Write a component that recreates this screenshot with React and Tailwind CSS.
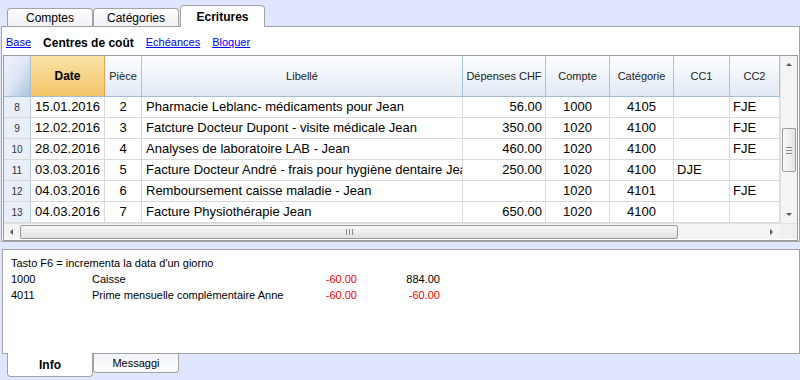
import React from 'react'

const cols = 'grid grid-cols-[27px_74px_37px_321px_83px_64px_64px_56px_50px]'

const rows = [
  ['8', '15.01.2016', '2', 'Pharmacie Leblanc- médicaments pour Jean', '56.00', '1000', '4105', '', 'FJE'],
  ['9', '12.02.2016', '3', 'Fatcture Docteur Dupont - visite médicale Jean', '350.00', '1020', '4100', '', 'FJE'],
  ['10', '28.02.2016', '4', 'Analyses de laboratoire LAB - Jean', '460.00', '1020', '4100', '', 'FJE'],
  ['11', '03.03.2016', '5', 'Facture Docteur André - frais pour hygiène dentaire Jean', '250.00', '1020', '4100', 'DJE', ''],
  ['12', '04.03.2016', '6', 'Remboursement caisse maladie - Jean', '', '1020', '4101', '', 'FJE'],
  ['13', '04.03.2016', '7', 'Facture Physiothérapie Jean', '650.00', '1020', '4100', '', ''],
]

const align = [
  'justify-center text-[10px] text-[#333] bg-[#e8eff9] border-r-[#b7cbe0]',
  'justify-start pl-[4px]',
  'justify-center',
  'justify-start pl-[4px]',
  'justify-end pr-[3px]',
  'justify-center',
  'justify-center',
  'justify-start pl-[3px]',
  'justify-start pl-[3px]',
]

function Arrow({ dir }) {
  const pts = {
    up: '1,5 4,2 7,5',
    down: '1,2 4,5 7,2',
    left: '5,1 2,4 5,7',
    right: '3,1 6,4 3,7',
  }[dir]
  return (
    <svg width="8" height="8" viewBox="0 0 8 8">
      <polygon points={pts} fill="#5a5a5a" />
    </svg>
  )
}

function Tab({ label, active, wide }) {
  if (active) {
    return (
      <div className="w-[85px] h-[22px] -mb-px ml-px bg-white border border-b-0 border-[#a3a3a3] rounded-t-[4px] flex items-center justify-center text-[12px] font-bold relative z-10">
        {label}
      </div>
    )
  }
  return (
    <div className={`${wide} h-[18px] bg-gradient-to-b from-white to-[#eef0f5] border border-b-0 border-[#a3a3a3] rounded-t-[4px] flex items-center justify-center text-[12px] pt-px`}>
      {label}
    </div>
  )
}

export default function App() {
  return (
    <div className="w-[800px] h-[380px] bg-[#dfe6fd] flex flex-col overflow-hidden text-black font-['Liberation_Sans',Arial,sans-serif]">
      {/* top tabs */}
      <div className="h-[26px] flex items-end pl-[7px] shrink-0">
        <Tab label="Comptes" wide="w-[86px]" />
        <Tab label="Catégories" wide="w-[86px]" />
        <Tab label="Ecritures" active />
      </div>

      {/* main panel */}
      <div className="ml-px w-[799px] h-[216px] shrink-0 bg-white border border-[#a3a3a3] px-px flex flex-col">
        <div className="h-[28px] flex items-center gap-[12px] pl-[3px] pt-[3px] text-[11px]">
          <span className="text-[#0000ff] underline">Base</span>
          <span className="text-[12px] font-bold">Centres de coût</span>
          <span className="text-[#0000ff] underline">Echéances</span>
          <span className="text-[#0000ff] underline">Bloquer</span>
        </div>

        <div className="flex-1 border border-[#9a9a9a] flex flex-col overflow-hidden">
          <div className="flex h-[167px]">
            <div className="w-[776px] overflow-hidden">
              {/* header */}
              <div className={`${cols} h-[41px] border-b border-[#a3bdd6] text-[11px] text-[#222]`}>
                <div className="bg-gradient-to-br from-[#eef2fc] via-[#dfe7f6] to-[#aac2dd] border-r border-[#a9c2dc]" />
                <div className="bg-gradient-to-b from-[#fae3a6] to-[#f4c466] border-r border-[#e9a449] flex items-center justify-center text-[12px] font-bold text-black">
                  Date
                </div>
                {['Pièce', 'Libellé', 'Dépenses CHF', 'Compte', 'Catégorie', 'CC1', 'CC2'].map((h) => (
                  <div key={h} className="bg-gradient-to-b from-[#fcfdfe] to-[#e2eaf5] border-r border-[#a9c2dc] flex items-center justify-center whitespace-nowrap overflow-hidden">
                    {h}
                  </div>
                ))}
              </div>
              {/* rows */}
              {rows.map((r) => (
                <div key={r[0]} className={`${cols} h-[21px] border-b border-[#d9d9d9] text-[13px]`}>
                  {r.map((c, i) => (
                    <div key={i} className={`flex items-center whitespace-nowrap overflow-hidden border-r border-[#d9d9d9] ${align[i]}`}>
                      {c}
                    </div>
                  ))}
                </div>
              ))}
            </div>
            {/* vertical scrollbar */}
            <div className="flex-1 bg-[#f4f3f5] border-l border-[#e2e2e2] flex flex-col items-center">
              <div className="h-[17px] flex items-center justify-center">
                <Arrow dir="up" />
              </div>
              <div className="h-[55px]" />
              <div className="w-[14px] h-[44px] rounded-[2px] border border-[#9a9a9a] bg-gradient-to-r from-[#f8f8f8] to-[#e4e4e4] flex flex-col items-center justify-center gap-[2px]">
                <div className="w-[6px] h-px bg-[#8a8a8a]" />
                <div className="w-[6px] h-px bg-[#8a8a8a]" />
                <div className="w-[6px] h-px bg-[#8a8a8a]" />
              </div>
              <div className="flex-1" />
              <div className="h-[17px] flex items-center justify-center">
                <Arrow dir="down" />
              </div>
            </div>
          </div>
          {/* horizontal scrollbar */}
          <div className="flex h-[16px] border-t border-[#e2e2e2]">
            <div className="w-[776px] bg-[#f4f3f5] flex items-center">
              <div className="w-[16px] flex items-center justify-center">
                <Arrow dir="left" />
              </div>
              <div className="w-[658px] h-[14px] rounded-[2px] border border-[#9a9a9a] bg-gradient-to-b from-[#f8f8f8] to-[#e2e2e2] flex items-center justify-center gap-[2px]">
                <div className="w-px h-[6px] bg-[#8a8a8a]" />
                <div className="w-px h-[6px] bg-[#8a8a8a]" />
                <div className="w-px h-[6px] bg-[#8a8a8a]" />
              </div>
              <div className="flex-1 flex items-center justify-end pr-[5px]">
                <Arrow dir="right" />
              </div>
            </div>
            <div className="flex-1 bg-[#f0f0f0]" />
          </div>
        </div>
      </div>

      {/* splitter gap */}
      <div className="h-[7px] shrink-0" />

      {/* info panel */}
      <div className="ml-[2px] w-[798px] h-[105px] shrink-0 bg-white border border-[#a3a3a3] pt-[5px] pl-[8px] text-[11px] leading-[16px]">
        <div>Tasto F6 = incrementa la data d'un giorno</div>
        <div className="grid grid-cols-[81px_220px_45px_83px]">
          <span>1000</span>
          <span>Caisse</span>
          <span className="text-right text-[#ff0000]">-60.00</span>
          <span className="text-right">884.00</span>
          <span>4011</span>
          <span>Prime mensuelle complémentaire Anne</span>
          <span className="text-right text-[#ff0000]">-60.00</span>
          <span className="text-right text-[#ff0000]">-60.00</span>
        </div>
      </div>

      {/* bottom tabs */}
      <div className="flex items-start pl-[7px] shrink-0">
        <div className="w-[86px] h-[24px] -mt-px bg-white border border-t-0 border-[#a3a3a3] rounded-b-[4px] flex items-center justify-center text-[12px] font-bold relative z-10">
          Info
        </div>
        <div className="w-[86px] h-[19px] bg-gradient-to-b from-[#f2f3f7] to-white border border-t-0 border-[#a3a3a3] rounded-b-[4px] flex items-center justify-center text-[11px]">
          Messaggi
        </div>
      </div>
    </div>
  )
}
